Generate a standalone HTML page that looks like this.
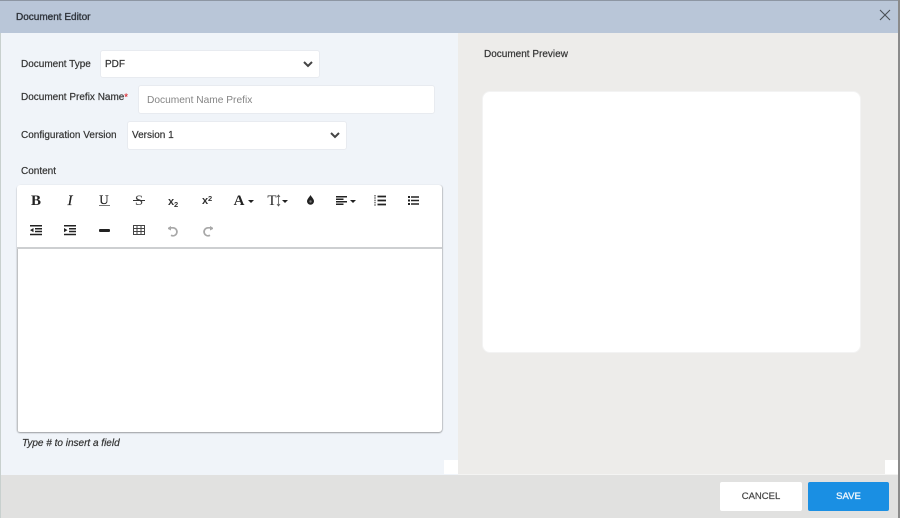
<!DOCTYPE html>
<html><head><meta charset="utf-8"><style>
*{box-sizing:border-box}
html,body{margin:0;padding:0;width:900px;height:518px;overflow:hidden;background:#dfe2e2;font-family:"Liberation Sans",sans-serif;color:#333}
.a{position:absolute}
.t{position:absolute;font-size:10px;line-height:14px;white-space:nowrap;color:#333;-webkit-text-stroke:.2px #333}
.box{position:absolute;background:#fff;border:1px solid #e8ebf0;border-radius:3px}
.tb{position:absolute;font-family:"Liberation Serif",serif;color:#222;white-space:nowrap;line-height:16px;text-align:center}
svg{position:absolute;overflow:visible}
</style></head><body>
<div class="a" style="left:0;top:0;width:898px;height:33px;background:#b9c6d8;border-top:1px solid #8d96a3"></div>
<div class="a" style="left:1px;top:33px;width:457px;height:442px;background:#f0f4f9"></div>
<div class="a" style="left:458px;top:33px;width:440px;height:441px;background:#edecea"></div>
<div class="a" style="left:458px;top:474px;width:440px;height:1px;background:#f4f4f3"></div>
<div class="a" style="left:0;top:475px;width:898px;height:43px;background:#e1e1e0"></div>
<div class="a" style="left:0;top:33px;width:1px;height:485px;background:#c8d0ce"></div>
<div class="a" style="left:898px;top:0;width:2px;height:518px;background:#8b8b8b"></div>
<div class="a" style="left:444px;top:460px;width:14px;height:14px;background:#fff"></div>
<div class="a" style="left:885px;top:460px;width:13px;height:14px;background:#fff"></div>

<div class="t" style="left:16px;top:11px;color:#2f343b;-webkit-text-stroke:.35px #2f343b">Document Editor</div>
<svg style="left:880px;top:10px" width="10" height="10"><path d="M0 0L10 10M10 0L0 10" stroke="#4a4f56" stroke-width="1.1" fill="none"/></svg>

<div class="t" style="left:21px;top:58px">Document Type</div>
<div class="box" style="left:100px;top:50px;width:220px;height:28px"></div>
<div class="t" style="left:105px;top:58px">PDF</div>
<svg style="left:303px;top:61px" width="10" height="7"><path d="M1 1L5 5L9 1" stroke="#444" stroke-width="2" fill="none"/></svg>

<div class="t" style="left:21px;top:90px">Document Prefix Name<span style="color:#d8232a;font-size:9px;-webkit-text-stroke:.2px #d8232a">*</span></div>
<div class="box" style="left:138px;top:85px;width:297px;height:29px"></div>
<div class="t" style="left:147px;top:94px;color:#858585;-webkit-text-stroke:0;font-size:10.2px">Document Name Prefix</div>

<div class="t" style="left:21px;top:129px">Configuration Version</div>
<div class="box" style="left:127px;top:121px;width:220px;height:29px"></div>
<div class="t" style="left:132px;top:129px">Version 1</div>
<svg style="left:330px;top:132px" width="10" height="7"><path d="M1 1L5 5L9 1" stroke="#444" stroke-width="2" fill="none"/></svg>

<div class="t" style="left:21px;top:165px">Content</div>

<div class="a" style="left:17px;top:185px;width:425px;height:247px;background:#fff;border-radius:3px;box-shadow:0 1px 1.5px rgba(0,0,0,.35),1px 0 1px rgba(0,0,0,.12)"></div>
<div class="a" style="left:17px;top:247px;width:425px;height:2px;background:#cdcfd1"></div>
<div class="a" style="left:17px;top:249px;width:1px;height:182px;background:#c0c2c4"></div>

<div class="tb" style="left:26px;top:193px;width:20px;font-size:15px;font-weight:bold">B</div>
<div class="tb" style="left:60px;top:193px;width:20px;font-size:15px;font-style:italic;-webkit-text-stroke:.2px #222">I</div>
<div class="tb" style="left:94px;top:192px;width:20px;font-size:13px;-webkit-text-stroke:.2px #222">U</div>
<div class="a" style="left:99px;top:205px;width:11px;height:1px;background:#777"></div>
<div class="tb" style="left:129px;top:193px;width:20px;font-size:15px;color:#444">S</div>
<div class="a" style="left:133px;top:200px;width:12px;height:1px;background:#333"></div>
<div class="t" style="left:168px;top:195px;font-size:11px;font-weight:bold;-webkit-text-stroke:0">x</div>
<div class="t" style="left:174px;top:198px;font-size:7.5px;font-weight:bold;-webkit-text-stroke:0">2</div>
<div class="t" style="left:202px;top:194px;font-size:11px;font-weight:bold;-webkit-text-stroke:0">x</div>
<div class="t" style="left:208px;top:192px;font-size:7.5px;font-weight:bold;-webkit-text-stroke:0">2</div>
<div class="tb" style="left:232px;top:193px;width:14px;font-size:15px;font-weight:bold">A</div>
<svg style="left:248px;top:200px" width="6" height="3"><path d="M0 0H6L3 3Z" fill="#222"/></svg>
<div class="tb" style="left:266px;top:193px;width:12px;font-size:15px">T</div>
<svg style="left:277px;top:195px" width="3" height="12"><path d="M1.5 0V11M0 2L1.5 0L3 2M0 9L1.5 11L3 9" stroke="#555" stroke-width=".8" fill="none"/></svg>
<svg style="left:282px;top:200px" width="6" height="3"><path d="M0 0H6L3 3Z" fill="#222"/></svg>
<svg style="left:307px;top:195px" width="7" height="10"><path d="M3.5 0C4.5 2 7 4 7 6.3A3.5 3.5 0 0 1 0 6.3C0 4 2.5 2 3.5 0Z" fill="#222"/><circle cx="3.5" cy="6.5" r="1.2" fill="#777"/></svg>
<svg style="left:336px;top:196px" width="11" height="9"><path d="M0 .75H11M0 3.25H7.5M0 5.75H11M0 8.25H7.5" stroke="#222" stroke-width="1.5" fill="none"/></svg>
<svg style="left:350px;top:200px" width="6" height="3"><path d="M0 0H6L3 3Z" fill="#222"/></svg>
<svg style="left:374px;top:195px" width="12" height="11"><path d="M3.5 1.5H12M3.5 5.5H12M3.5 9.5H12" stroke="#222" stroke-width="1.7" fill="none"/><path d="M1 0V11" stroke="#777" stroke-width="1.6" stroke-dasharray="1.5 .8" fill="none"/></svg>
<svg style="left:408px;top:196px" width="11" height="9"><path d="M3 1H11M3 4.5H11M3 8H11" stroke="#222" stroke-width="1.6" fill="none"/><path d="M0 0H2V2H0ZM0 3.5H2V5.5H0ZM0 7H2V9H0Z" fill="#222"/></svg>

<svg style="left:30px;top:225px" width="12" height="11"><path d="M0 .75H12M5 3.7H12M5 6.5H12M0 9.5H12" stroke="#222" stroke-width="1.5" fill="none"/><path d="M3.5 3V7.2L0 5.1Z" fill="#222"/></svg>
<svg style="left:64px;top:225px" width="12" height="11"><path d="M0 .75H12M5 3.7H12M5 6.5H12M0 9.5H12" stroke="#222" stroke-width="1.5" fill="none"/><path d="M0 3V7.2L3.5 5.1Z" fill="#222"/></svg>
<div class="a" style="left:99px;top:229px;width:11px;height:3px;background:#222;border-radius:1px"></div>
<svg style="left:133px;top:225px" width="12" height="10"><path d="M.5 .5H11.5V9.5H.5ZM.5 3.5H11.5M.5 6.5H11.5M4 .5V9.5M8 .5V9.5" stroke="#444" stroke-width="1" fill="none"/></svg>
<svg style="left:168px;top:226px" width="10" height="10"><path d="M2 1.8H5A4 4 0 1 1 3 9.3" stroke="#a8a8a8" stroke-width="1.7" fill="none"/><path d="M0 1.8L3 0V4.5L0 3Z" fill="#a8a8a8"/></svg>
<svg style="left:203px;top:226px" width="10" height="10"><path d="M8 1.8H5A4 4 0 1 0 7 9.3" stroke="#a8a8a8" stroke-width="1.7" fill="none"/><path d="M10 1.8L7 0V4.5L10 3Z" fill="#a8a8a8"/></svg>

<div class="t" style="left:22px;top:437px;font-style:italic">Type # to insert a field</div>

<div class="t" style="left:484px;top:48px">Document Preview</div>
<div class="a" style="left:482px;top:91px;width:379px;height:262px;background:#fff;border:1px solid #f3f3f3;border-radius:8px"></div>

<div class="a" style="left:720px;top:482px;width:82px;height:29px;background:#fff;border-radius:2px;font-size:9.5px;line-height:29px;text-align:center;color:#444;-webkit-text-stroke:.2px #444">CANCEL</div>
<div class="a" style="left:808px;top:482px;width:81px;height:29px;background:#1a8fe3;border-radius:2px;font-size:9.5px;line-height:29px;text-align:center;color:#eaf4fc;-webkit-text-stroke:.35px #eaf4fc">SAVE</div>
</body></html>
